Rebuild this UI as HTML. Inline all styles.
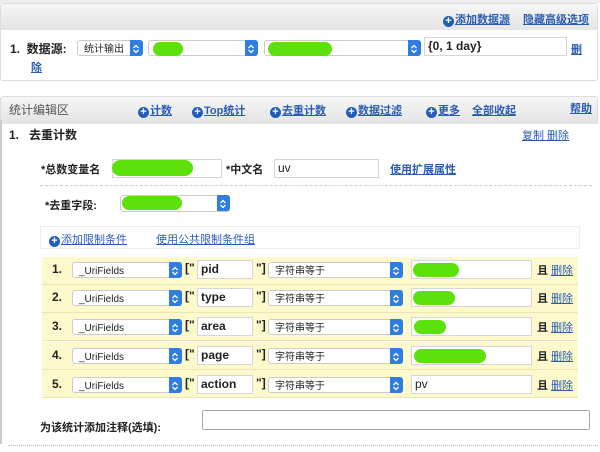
<!DOCTYPE html>
<html><head><meta charset="utf-8"><style>
*{box-sizing:border-box;margin:0;padding:0}
body{width:600px;height:452px;background:#fff;position:relative;overflow:hidden;font-family:"Liberation Sans","Noto Sans CJK SC",sans-serif;font-size:11px;color:#222}
.a{position:absolute;white-space:nowrap}
.b{font-weight:bold}
.lk{color:#2a5db0;text-decoration:underline;font-weight:bold}
.plus{display:inline-block;width:11px;height:11px;border-radius:50%;background:#1f5fb8;color:#fff;font-size:11px;line-height:11px;text-align:center;font-weight:bold;vertical-align:-1px;margin-right:1px}
.sel{position:absolute;height:16px;border:1px solid #ccc;border-radius:3px;background:#fff;font-size:10px;line-height:12px;padding:3px 0 0 6px;white-space:nowrap}
.sel:after{content:"";position:absolute;right:-1px;top:-1px;width:13px;height:16px;background:#2f7de0;border-radius:0 3px 3px 0}
.sel svg{position:absolute;right:1px;top:2px;z-index:2}
.inp{position:absolute;height:19px;border:1px solid #d6d6d6;background:#fff;font-size:12px;line-height:17px;padding-left:3px;font-weight:bold}
.g{position:absolute;height:14px;background:#5ce20a;border-radius:8px}
.row{position:absolute;left:42px;width:536px;height:28px;background:#fdf9cc;border-bottom:1px solid #ece7b0}
</style></head><body>
<div class="a" style="left:0;top:0;width:600px;height:3px;background:#eee"></div>
<div class="a" style="left:0;top:3px;width:598px;height:78px;border:1px solid #ddd;border-radius:3px"></div>
<div class="a" style="left:1px;top:4px;width:596px;height:26px;background:linear-gradient(#f6f6f6,#e5e5e5)"></div>
<div class="a lk" style="left:443px;top:11px"><span class="plus">+</span>添加数据源</div>
<div class="a lk" style="left:523px;top:11px">隐藏高级选项</div>
<div class="a b" style="left:10px;top:40px;font-size:12px">1.&nbsp; 数据源:</div>
<div class="sel" style="left:77px;top:40px;width:66px">统计输出<svg width="10" height="12" viewBox="0 0 10 12"><path d="M2.5 5L5 2.5L7.5 5M2.5 7L5 9.5L7.5 7" fill="none" stroke="#fff" stroke-width="1.3"/></svg></div>
<div class="sel" style="left:148px;top:40px;width:110px"><svg width="10" height="12" viewBox="0 0 10 12"><path d="M2.5 5L5 2.5L7.5 5M2.5 7L5 9.5L7.5 7" fill="none" stroke="#fff" stroke-width="1.3"/></svg></div>
<div class="g" style="left:153px;top:42px;width:30px"></div>
<div class="sel" style="left:264px;top:40px;width:157px"><svg width="10" height="12" viewBox="0 0 10 12"><path d="M2.5 5L5 2.5L7.5 5M2.5 7L5 9.5L7.5 7" fill="none" stroke="#fff" stroke-width="1.3"/></svg></div>
<div class="g" style="left:268px;top:42px;width:64px"></div>
<div class="inp" style="left:424px;top:37px;width:143px;font-weight:bold">{0, 1 day}</div>
<div class="a lk" style="left:571px;top:41px">删</div>
<div class="a lk" style="left:31px;top:59px">除</div>
<div class="a" style="left:0;top:96px;width:598px;height:28px;border:1px solid #ddd;border-bottom:none;border-radius:3px 3px 0 0;background:linear-gradient(#f6f6f6,#e3e3e3)"></div>
<div class="a" style="left:0;top:120px;width:2px;height:324px;background:#ccc"></div>
<div class="a" style="left:9px;top:101px;color:#555;font-size:12px">统计编辑区</div>
<div class="a lk" style="left:138px;top:102px"><span class="plus">+</span>计数</div>
<div class="a lk" style="left:192px;top:102px"><span class="plus">+</span>Top统计</div>
<div class="a lk" style="left:270px;top:102px"><span class="plus">+</span>去重计数</div>
<div class="a lk" style="left:346px;top:102px"><span class="plus">+</span>数据过滤</div>
<div class="a lk" style="left:426px;top:102px"><span class="plus">+</span>更多</div>
<div class="a lk" style="left:472px;top:102px">全部收起</div>
<div class="a lk" style="left:570px;top:100px">帮助</div>
<div class="a b" style="left:9px;top:126px;font-size:12px">1.&nbsp;&nbsp; 去重计数</div>
<div class="a lk" style="left:522px;top:127px;font-weight:normal">复制 删除</div>
<div class="a b" style="left:41px;top:161px">*总数变量名</div>
<div class="inp" style="left:112px;top:159px;width:110px"></div>
<div class="g" style="left:112px;top:160px;width:81px;height:16px"></div>
<div class="a b" style="left:226px;top:161px">*中文名</div>
<div class="inp" style="left:274px;top:159px;width:105px;font-weight:normal">uv</div>
<div class="a lk" style="left:390px;top:161px">使用扩展属性</div>
<div class="a" style="left:40px;top:185px;width:552px;border-top:1px dashed #ccc"></div>
<div class="a b" style="left:45px;top:197px">*去重字段:</div>
<div class="sel" style="left:120px;top:195px;width:110px;height:17px"><svg width="10" height="12" viewBox="0 0 10 12"><path d="M2.5 5L5 2.5L7.5 5M2.5 7L5 9.5L7.5 7" fill="none" stroke="#fff" stroke-width="1.3"/></svg></div>
<div class="g" style="left:122px;top:196px;width:60px"></div>
<div class="a" style="left:40px;top:226px;width:540px;height:23px;border:1px solid #eee"></div>
<div class="a lk" style="left:49px;top:231px;font-weight:normal"><span class="plus">+</span>添加限制条件</div>
<div class="a lk" style="left:156px;top:231px;font-weight:normal">使用公共限制条件组</div>

<div class="row" style="top:257px"></div>
<div class="row" style="top:285px"></div>
<div class="row" style="top:313px"></div>
<div class="row" style="top:342px"></div>
<div class="row" style="top:370px"></div>

<div class="a b" style="left:52px;top:262px;font-size:12px">1.</div>
<div class="sel" style="left:72px;top:262px;width:110px">_UriFields<svg width="10" height="12" viewBox="0 0 10 12"><path d="M2.5 5L5 2.5L7.5 5M2.5 7L5 9.5L7.5 7" fill="none" stroke="#fff" stroke-width="1.3"/></svg></div>
<div class="a b" style="left:185px;top:261px;font-size:12px">["</div>
<div class="inp" style="left:197px;top:260px;width:56px">pid</div>
<div class="a b" style="left:256px;top:261px;font-size:12px">"]</div>
<div class="sel" style="left:268px;top:262px;width:135px">字符串等于<svg width="10" height="12" viewBox="0 0 10 12"><path d="M2.5 5L5 2.5L7.5 5M2.5 7L5 9.5L7.5 7" fill="none" stroke="#fff" stroke-width="1.3"/></svg></div>
<div class="inp" style="left:411px;top:260px;width:121px"></div>
<div class="g" style="left:413px;top:263px;width:46px"></div>
<div class="a b" style="left:537px;top:262px">且 <span class="lk" style="font-weight:normal">删除</span></div>

<div class="a b" style="left:52px;top:290px;font-size:12px">2.</div>
<div class="sel" style="left:72px;top:290px;width:110px">_UriFields<svg width="10" height="12" viewBox="0 0 10 12"><path d="M2.5 5L5 2.5L7.5 5M2.5 7L5 9.5L7.5 7" fill="none" stroke="#fff" stroke-width="1.3"/></svg></div>
<div class="a b" style="left:185px;top:289px;font-size:12px">["</div>
<div class="inp" style="left:197px;top:288px;width:56px">type</div>
<div class="a b" style="left:256px;top:289px;font-size:12px">"]</div>
<div class="sel" style="left:268px;top:290px;width:135px">字符串等于<svg width="10" height="12" viewBox="0 0 10 12"><path d="M2.5 5L5 2.5L7.5 5M2.5 7L5 9.5L7.5 7" fill="none" stroke="#fff" stroke-width="1.3"/></svg></div>
<div class="inp" style="left:411px;top:288px;width:121px"></div>
<div class="g" style="left:413px;top:291px;width:42px"></div>
<div class="a b" style="left:537px;top:290px">且 <span class="lk" style="font-weight:normal">删除</span></div>

<div class="a b" style="left:52px;top:319px;font-size:12px">3.</div>
<div class="sel" style="left:72px;top:319px;width:110px">_UriFields<svg width="10" height="12" viewBox="0 0 10 12"><path d="M2.5 5L5 2.5L7.5 5M2.5 7L5 9.5L7.5 7" fill="none" stroke="#fff" stroke-width="1.3"/></svg></div>
<div class="a b" style="left:185px;top:318px;font-size:12px">["</div>
<div class="inp" style="left:197px;top:317px;width:56px">area</div>
<div class="a b" style="left:256px;top:318px;font-size:12px">"]</div>
<div class="sel" style="left:268px;top:319px;width:135px">字符串等于<svg width="10" height="12" viewBox="0 0 10 12"><path d="M2.5 5L5 2.5L7.5 5M2.5 7L5 9.5L7.5 7" fill="none" stroke="#fff" stroke-width="1.3"/></svg></div>
<div class="inp" style="left:411px;top:317px;width:121px"></div>
<div class="g" style="left:414px;top:320px;width:32px"></div>
<div class="a b" style="left:537px;top:319px">且 <span class="lk" style="font-weight:normal">删除</span></div>

<div class="a b" style="left:52px;top:348px;font-size:12px">4.</div>
<div class="sel" style="left:72px;top:348px;width:110px">_UriFields<svg width="10" height="12" viewBox="0 0 10 12"><path d="M2.5 5L5 2.5L7.5 5M2.5 7L5 9.5L7.5 7" fill="none" stroke="#fff" stroke-width="1.3"/></svg></div>
<div class="a b" style="left:185px;top:347px;font-size:12px">["</div>
<div class="inp" style="left:197px;top:346px;width:56px">page</div>
<div class="a b" style="left:256px;top:347px;font-size:12px">"]</div>
<div class="sel" style="left:268px;top:348px;width:135px">字符串等于<svg width="10" height="12" viewBox="0 0 10 12"><path d="M2.5 5L5 2.5L7.5 5M2.5 7L5 9.5L7.5 7" fill="none" stroke="#fff" stroke-width="1.3"/></svg></div>
<div class="inp" style="left:411px;top:346px;width:121px"></div>
<div class="g" style="left:414px;top:349px;width:72px"></div>
<div class="a b" style="left:537px;top:348px">且 <span class="lk" style="font-weight:normal">删除</span></div>

<div class="a b" style="left:52px;top:377px;font-size:12px">5.</div>
<div class="sel" style="left:72px;top:377px;width:110px">_UriFields<svg width="10" height="12" viewBox="0 0 10 12"><path d="M2.5 5L5 2.5L7.5 5M2.5 7L5 9.5L7.5 7" fill="none" stroke="#fff" stroke-width="1.3"/></svg></div>
<div class="a b" style="left:185px;top:376px;font-size:12px">["</div>
<div class="inp" style="left:197px;top:375px;width:56px">action</div>
<div class="a b" style="left:256px;top:376px;font-size:12px">"]</div>
<div class="sel" style="left:268px;top:377px;width:135px">字符串等于<svg width="10" height="12" viewBox="0 0 10 12"><path d="M2.5 5L5 2.5L7.5 5M2.5 7L5 9.5L7.5 7" fill="none" stroke="#fff" stroke-width="1.3"/></svg></div>
<div class="inp" style="left:411px;top:375px;width:121px;font-weight:normal">pv</div>
<div class="a b" style="left:537px;top:377px">且 <span class="lk" style="font-weight:normal">删除</span></div>

<div class="a b" style="left:40px;top:419px">为该统计添加注释(选填):</div>
<div class="a" style="left:202px;top:410px;width:388px;height:20px;border:1px solid #aaa;border-radius:2px"></div>
<div class="a" style="left:8px;top:445px;width:590px;border-top:1px dotted #bbb"></div>
</body></html>
